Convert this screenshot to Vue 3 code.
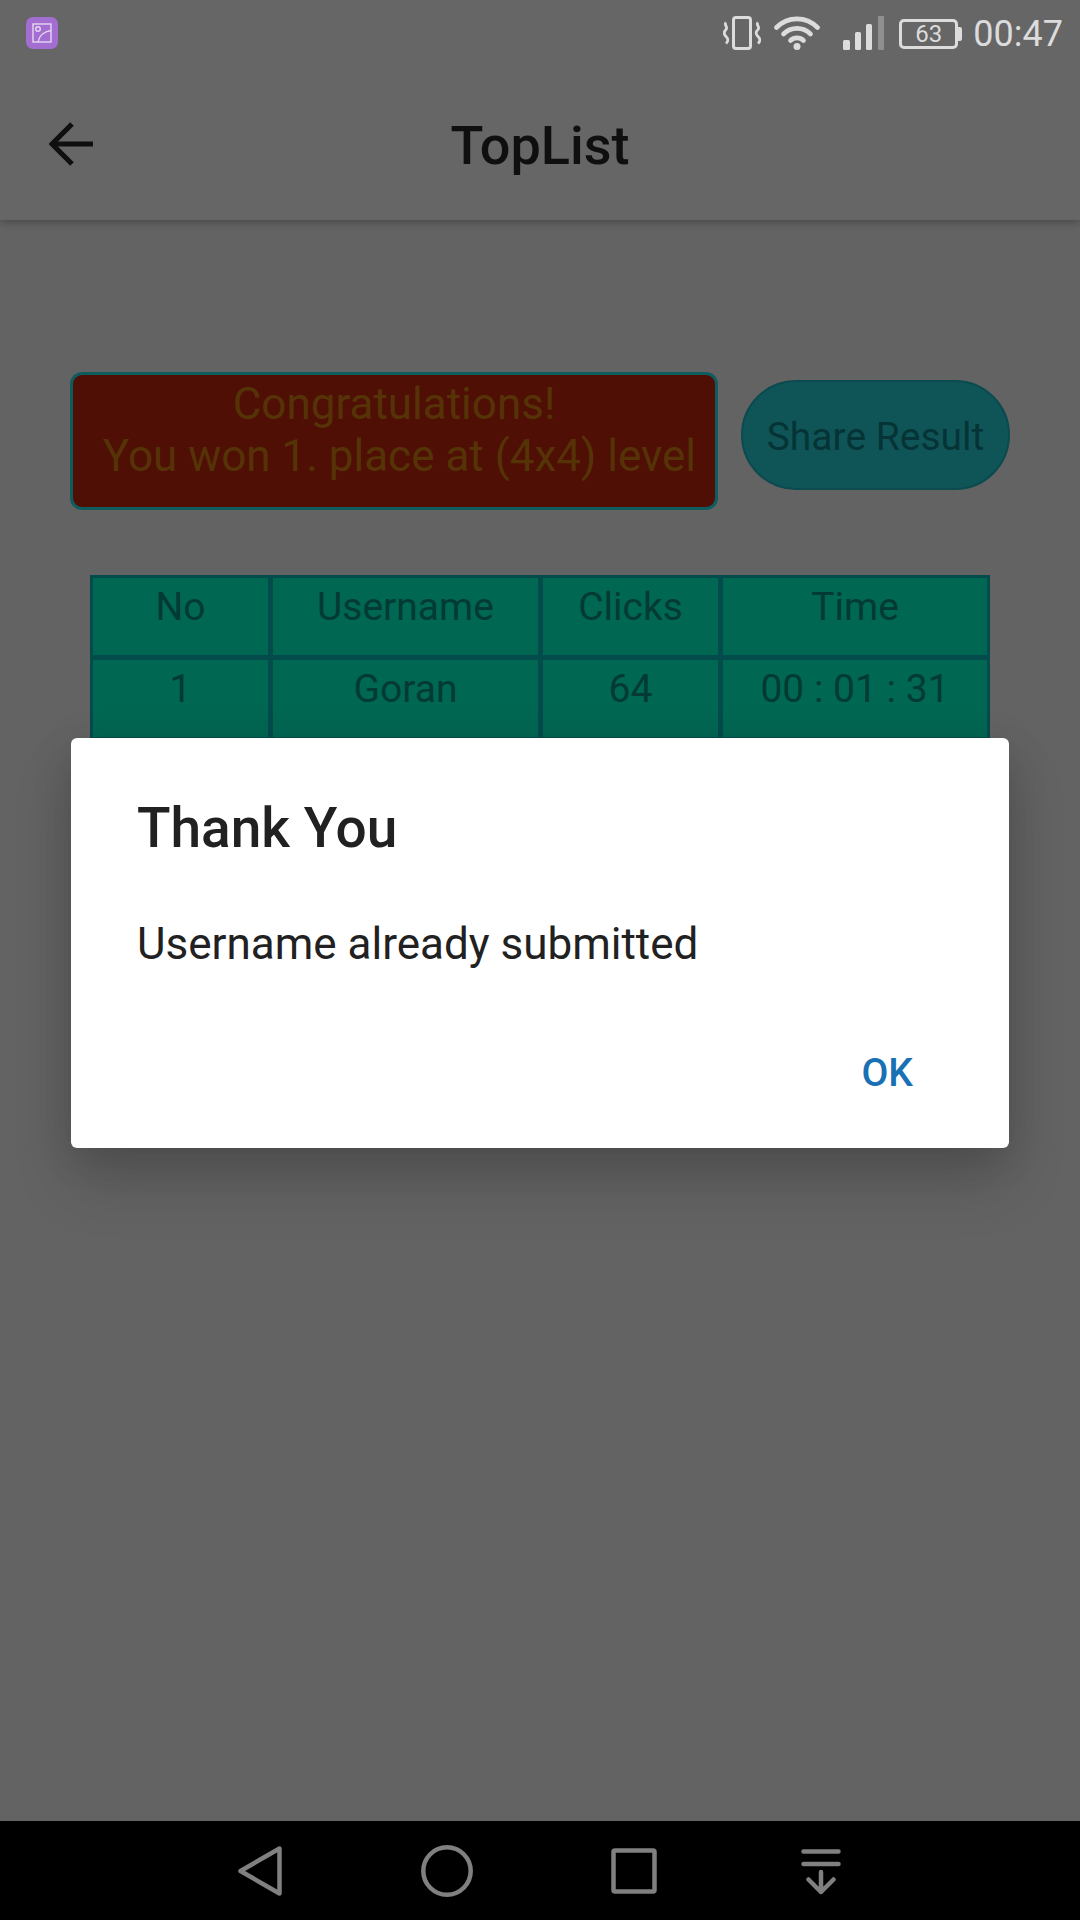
<script setup>
const columns = ['No', 'Username', 'Clicks', 'Time']
const row = ['1', 'Goran', '64', '00 : 01 : 31']
const message = 'Congratulations!\n You won 1. place at (4x4) level'
</script>

<template>
  <div class="screen">
    <header class="appbar">
      <div class="status">
        <div class="app-icon">
          <svg width="20" height="20" viewBox="0 0 20 20" fill="none" stroke="#e6d8f0" stroke-width="1.4">
            <rect x="1" y="1" width="18" height="18" />
            <circle cx="6" cy="6" r="2.3" />
            <path d="M6 19C7 13 12 8.500 19 7.500" />
          </svg>
        </div>
        <div class="status-right">
          <svg class="i-vib" width="38" height="34" viewBox="0 0 38 34" fill="none" stroke="#dcdcdc">
            <rect x="10.500" y="1.500" width="17" height="31" rx="2.500" stroke-width="3" />
            <path d="M3 6.500C0.500 9 5.500 11 3 13.500S0.500 18 3 20.500 5.500 25 3 27.500" stroke-width="2.800" />
            <path d="M35 6.500C32.500 9 37.500 11 35 13.500S32.500 18 35 20.500 37.500 25 35 27.500" stroke-width="2.800" />
          </svg>
          <svg class="i-wifi" width="46" height="34" viewBox="0 0 46 34" fill="none" stroke="#dcdcdc" stroke-width="4.600" stroke-linecap="round">
            <path d="M2.500 11.500C14 0 32 0 43.500 11.500" />
            <path d="M9.500 18C17 10.500 29 10.500 36.500 18" />
            <path d="M16.500 24.500C20 21 26 21 29.500 24.500" />
            <circle cx="23" cy="30.500" r="3.500" fill="#dcdcdc" stroke="none" />
          </svg>
          <svg class="i-signal" width="42" height="34" viewBox="0 0 42 34">
            <rect x="0" y="24" width="7" height="10" rx="1.500" fill="#dcdcdc" />
            <rect x="12" y="16" width="6" height="18" rx="1.500" fill="#dcdcdc" />
            <rect x="23" y="8" width="6" height="26" rx="1.500" fill="#dcdcdc" />
            <rect x="35" y="0" width="6" height="34" rx="1" fill="#8f8f8f" />
          </svg>
          <div class="battery">
            <div class="battery-body">63</div>
            <div class="battery-cap"></div>
          </div>
          <span class="clock">00:47</span>
        </div>
      </div>
      <div class="toolbar">
        <svg class="back" width="44" height="44" viewBox="0 0 44 44" fill="none" stroke="#0f0f0f" stroke-width="5">
          <path d="M44 22H4" />
          <path d="M23 2L3 22L23 42" />
        </svg>
        <h1 class="title">TopList</h1>
      </div>
    </header>

    <main class="content">
      <section class="result-row">
        <div class="congrats">{{ message }}</div>
        <div class="share">Share Result</div>
      </section>
      <section class="table">
        <div v-for="c in columns" :key="c" class="cell">{{ c }}</div>
        <div v-for="c in row" :key="c" class="cell">{{ c }}</div>
      </section>
    </main>

    <footer class="navbar">
      <svg width="44" height="50" viewBox="0 0 44 50" fill="none" stroke="#808080" stroke-width="4.500" stroke-linejoin="round">
        <path d="M41.500 2.500V47.500L2.500 25Z" />
      </svg>
      <svg width="52" height="52" viewBox="0 0 52 52" fill="none" stroke="#808080" stroke-width="4.500">
        <circle cx="26" cy="26" r="23.700" />
      </svg>
      <svg width="46" height="46" viewBox="0 0 46 46" fill="none" stroke="#808080" stroke-width="4.500" stroke-linejoin="round">
        <rect x="2.500" y="2.500" width="41" height="41" rx="1.500" />
      </svg>
      <svg width="40" height="46" viewBox="0 0 40 46" fill="none" stroke="#808080" stroke-width="4.500" stroke-linecap="round" stroke-linejoin="round">
        <path d="M2.500 2.500H37.500M2.500 15H37.500M20 23V43M7.500 30.500L20 43L32.500 30.500" />
      </svg>
    </footer>

    <div class="dialog">
      <h2 class="dialog-title">Thank You</h2>
      <p class="dialog-body">Username already submitted</p>
      <div class="dialog-actions"><span class="ok">OK</span></div>
    </div>
  </div>
</template>

<style scoped>
.screen {
  position: relative;
  width: 1080px;
  height: 1920px;
  display: flex;
  flex-direction: column;
  overflow: hidden;
  background: #636363;
  font-family: Roboto, "Liberation Sans", sans-serif;
}
.appbar {
  flex: none;
  height: 220px;
  background: #666666;
  box-shadow: 0 2px 8px rgba(0, 0, 0, 0.28);
  position: relative;
  z-index: 1;
}
.status {
  height: 66px;
  padding: 16px 17px 0 26px;
  box-sizing: border-box;
  display: flex;
  justify-content: space-between;
  align-items: flex-start;
}
.app-icon {
  width: 32px;
  height: 32px;
  margin-top: 1px;
  border-radius: 7px;
  background: #a46dd1;
  display: flex;
  align-items: center;
  justify-content: center;
}
.status-right {
  display: flex;
  align-items: flex-start;
}
.i-wifi { margin-left: 13px; }
.i-signal { margin-left: 23px; }
.battery {
  margin-left: 14px;
  margin-top: 3px;
  display: flex;
  align-items: center;
}
.battery-body {
  width: 59px;
  height: 30px;
  box-sizing: border-box;
  border: 3px solid #dcdcdc;
  border-radius: 5px;
  color: #dcdcdc;
  font-size: 24px;
  line-height: 24px;
  text-align: center;
}
.battery-cap {
  width: 4px;
  height: 14px;
  background: #dcdcdc;
  border-radius: 0 2px 2px 0;
}
.clock {
  margin-left: 11px;
  color: #dcdcdc;
  font-size: 36px;
  line-height: 36px;
}
.toolbar {
  height: 154px;
  position: relative;
  display: flex;
  align-items: center;
  justify-content: center;
}
.back {
  position: absolute;
  left: 49px;
  top: 56px;
}
.title {
  margin: 6px 0 0;
  color: #0f0f0f;
  font-size: 54px;
  font-weight: 500;
  line-height: 64px;
}
.content {
  flex: 1;
  padding-top: 152px;
  min-height: 0;
}
.result-row {
  display: flex;
  align-items: flex-start;
  margin-left: 70px;
  gap: 23px;
}
.congrats {
  width: 648px;
  height: 138px;
  box-sizing: border-box;
  border: 3px solid #0f5c5e;
  border-radius: 12px;
  background: #4f0f05;
  color: #553307;
  font-size: 44px;
  line-height: 52px;
  padding-top: 3px;
  text-align: center;
  white-space: pre;
}
.share {
  width: 269px;
  height: 110px;
  margin-top: 8px;
  box-sizing: border-box;
  border: 2px solid #0b4a4e;
  border-radius: 55px;
  background: #0f5558;
  color: #063436;
  font-size: 39px;
  line-height: 110px;
  text-align: center;
}
.table {
  margin: 65px 0 0 90px;
  width: 900px;
  box-sizing: border-box;
  padding: 3px;
  display: grid;
  grid-template-columns: 175px 265px 175px 264px;
  grid-auto-rows: 77px;
  gap: 5px;
  background: #044c4c;
}
.cell {
  background: #006753;
  color: #033a34;
  font-size: 39px;
  line-height: 50px;
  padding-top: 4px;
  text-align: center;
}
.navbar {
  flex: none;
  height: 99px;
  background: #000;
  box-sizing: border-box;
  padding-top: 24px;
  position: relative;
}
.navbar svg { position: absolute; }
.navbar svg:nth-child(1) { left: 238px; top: 25px; }
.navbar svg:nth-child(2) { left: 421px; top: 24px; }
.navbar svg:nth-child(3) { left: 611px; top: 27px; }
.navbar svg:nth-child(4) { left: 801px; top: 28px; }
.dialog {
  position: absolute;
  z-index: 2;
  left: 71px;
  top: 738px;
  width: 938px;
  height: 410px;
  box-sizing: border-box;
  padding: 54px 66px 0;
  background: #fff;
  border-radius: 6px;
  box-shadow: 0 34px 60px rgba(0, 0, 0, 0.16), 0 8px 40px rgba(0, 0, 0, 0.12);
  color: #212121;
}
.dialog-title {
  margin: 0;
  font-size: 55px;
  font-weight: 500;
  line-height: 72px;
}
.dialog-body {
  margin: 52px 0 0;
  font-size: 44px;
  line-height: 56px;
}
.dialog-actions {
  margin-top: 76px;
  display: flex;
  justify-content: flex-end;
}
.ok {
  margin-right: 30px;
  color: #1a70b5;
  font-size: 39px;
  font-weight: 500;
  line-height: 50px;
}
</style>
